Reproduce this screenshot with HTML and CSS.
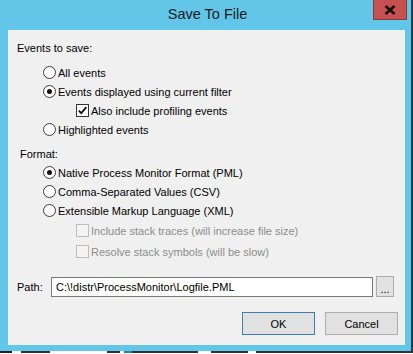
FILE: index.html
```html
<!DOCTYPE html>
<html lang="en">
<head>
  <meta charset="UTF-8" />
  <title>Save To File</title>
  <link rel="stylesheet" href="styles.css">
</head>
<body>
  <div class="window">
    <!-- TITLE BAR -->
    <div class="title-bar">
      <span class="title">Save To File</span>
      <button class="close-btn">
        <svg width="12" height="10" viewBox="0 0 12 10"><path d="M1.5 1 L10.5 9 M10.5 1 L1.5 9" stroke="#111" stroke-width="2.6"/></svg>
      </button>
    </div>

    <!-- CLIENT -->
    <div class="client">
      <div class="row heading">Events to save:</div>
      <div class="group first">
        <div class="row opt"><span class="radio"></span>All events</div>
        <div class="row opt"><span class="radio on"></span>Events displayed using current filter</div>
        <div class="row sub"><span class="check on"><svg width="11" height="11" viewBox="0 0 11 11"><path d="M1.8 5.6 L4.3 8.2 L9.3 2.2" fill="none" stroke="#111" stroke-width="1.8"/></svg></span>Also include profiling events</div>
        <div class="row opt"><span class="radio"></span>Highlighted events</div>
      </div>

      <div class="row heading fmt">Format:</div>
      <div class="group">
        <div class="row opt"><span class="radio on"></span>Native Process Monitor Format (PML)</div>
        <div class="row opt"><span class="radio"></span>Comma-Separated Values (CSV)</div>
        <div class="row opt"><span class="radio"></span>Extensible Markup Language (XML)</div>
        <div class="row sub off first-off"><span class="check"></span>Include stack traces (will increase file size)</div>
        <div class="row sub off"><span class="check"></span>Resolve stack symbols (will be slow)</div>
      </div>

      <div class="path-row">
        <label>Path:</label>
        <div class="path-input">C:\!distr\ProcessMonitor\Logfile.PML</div>
        <button class="browse">...</button>
      </div>

      <div class="buttons">
        <button class="btn default">OK</button>
        <button class="btn">Cancel</button>
      </div>
    </div>
  </div>
  <!-- the list window behind the dialog, only its top edge shows -->
  <div class="behind"></div>
</body>
</html>
```

FILE: styles.css
```css
* {margin: 0; padding: 0; box-sizing: border-box;}
body {
  width: 413px; height: 354px; overflow: hidden;
  background: #1d3d52;
  font-family: 'Liberation Sans', Arial, sans-serif;
  font-size: 11px;
  color: #000;
}

/* Window frame */
.window {
  width: 411px; height: 351px;
  background: #62c6e8;
  padding: 0 6px 0 8px;
}
.title-bar {
  position: relative;
  height: 30px;
  display: flex; justify-content: center; align-items: center;
  padding-bottom: 2px;
}
.title {font-size: 14.5px; color: #1a1a1a; padding-left: 2px;}
.close-btn {
  position: absolute; top: 0; right: -2px;
  width: 34px; height: 20px;
  background: #c75050; border: 1px solid #8a3a3a; border-top: none;
  display: flex; align-items: center; justify-content: center;
}

/* Client area */
.client {
  height: 315px;
  background: #f0f0f0;
  padding-top: 8px;
}
.row {height: 19px; display: flex; align-items: center; white-space: nowrap;}
.heading {padding-left: 9px;}
.heading.fmt {padding-left: 12px; margin-top: 5px;}
.group {margin-top: 6px;}
.heading.fmt + .group {margin-top: 0;}
.opt {padding-left: 35px;}
.sub {padding-left: 68px;}
.first-off {margin-top: 1px;}
.first-off + .sub {margin-top: 2px;}
.off {color: #8d8d8d;}

.radio {
  width: 13px; height: 13px; margin-right: 2px;
  border: 1px solid #3c3c3c; border-radius: 50%;
  background: #fff;
  display: flex; align-items: center; justify-content: center;
}
.radio.on::after {
  content: ""; width: 5px; height: 5px; border-radius: 50%; background: #111;
}
.check {
  width: 13px; height: 13px; margin-right: 2px;
  border: 1px solid #333; background: #fff;
  display: flex; align-items: center; justify-content: center;
}
.off .check {border-color: #bcbcbc; background: #f4f4f4;}

/* Path */
.path-row {
  margin-top: 15px;
  display: flex; align-items: center;
  padding-left: 9px;
}
.path-row label {width: 34px;}
.path-input {
  width: 322px; height: 20px;
  border: 1px solid #7a7a7a; background: #fff;
  padding-left: 4px;
  display: flex; align-items: center;
}
.browse {
  width: 18px; height: 21px; margin-left: 3px;
  border: 1px solid #acacac; background: #e1e1e1;
  font-family: inherit; font-size: 11px; line-height: 1;
  padding-top: 5px;
}

/* Buttons */
.buttons {
  margin-top: 15px;
  display: flex; justify-content: flex-end; gap: 10px;
  padding-right: 7px;
}
.btn {
  width: 73px; height: 23px;
  border: 1px solid #adadad; background: #e1e1e1;
  font-family: inherit; font-size: 11px; color: #000;
}
.btn.default {border-color: #3c7fb1;}

/* What shows below the dialog */
.behind {
  height: 3px;
  background:
    linear-gradient(90deg, #222 0 3%, transparent 3% 5%, #333 5% 12%, transparent 12% 26%,
      #333 26% 29%, transparent 29% 30%, #1e8a9a 30% 32%, #333 32% 48%, transparent 48% 51%,
      #333 51% 60%, transparent 60% 62%, #333 62% 100%) top/100% 2px no-repeat,
    #fff;
}
```
